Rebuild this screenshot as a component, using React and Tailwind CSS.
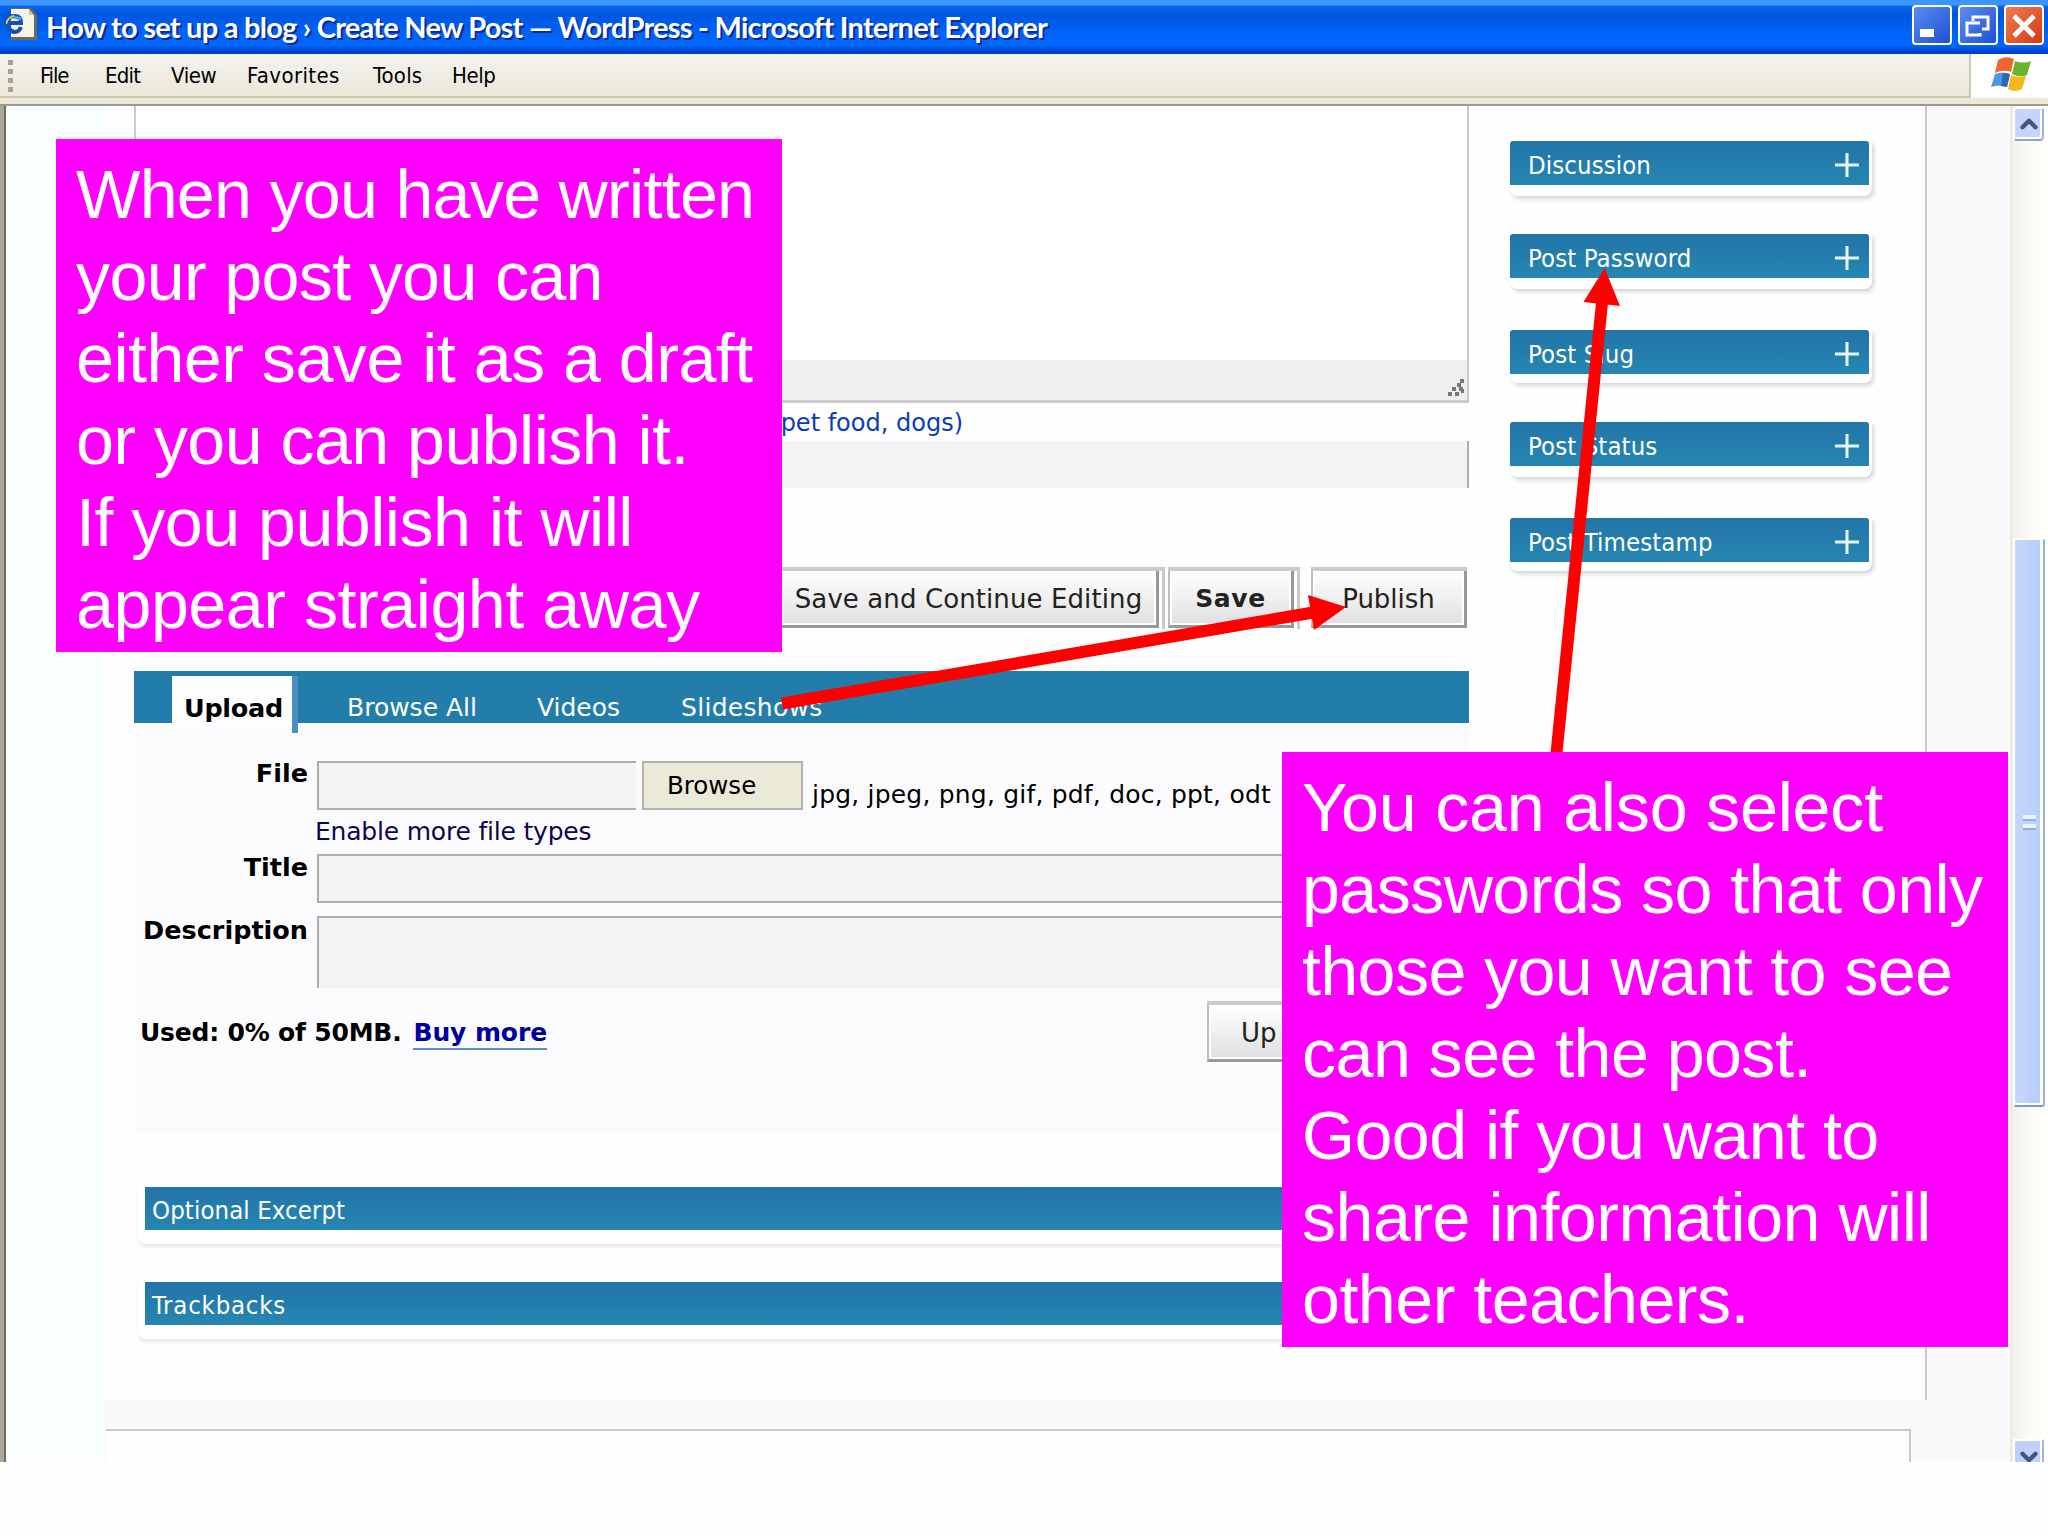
import { ChevronDown, ChevronUp } from "lucide-react";

const menuItems = [
  { label: "File", className: "w-[65px] tracking-[-1.2px]" },
  { label: "Edit", className: "w-[66px] tracking-[-0.8px]" },
  { label: "View", className: "w-[76px] tracking-[-0.4px]" },
  { label: "Favorites", className: "w-[126px] tracking-[0.4px]" },
  { label: "Tools", className: "w-[79px] tracking-[0.2px]" },
  { label: "Help", className: "w-[60px] tracking-[-0.4px]" },
];

const sidebarBoxes = [
  { title: "Discussion", className: "mb-[38px] h-[55px]" },
  { title: "Post Password", className: "mb-[41px] h-[55px]" },
  { title: "Post Slug", className: "mb-[39px] h-[53px]" },
  { title: "Post Status", className: "mb-[41px] h-[55px]" },
  { title: "Post Timestamp", className: "h-[53px]" },
];

const publishNote = [
  { text: "When you have written", className: "tracking-[-0.76px]" },
  { text: "your post you can", className: "tracking-[-0.7px]" },
  { text: "either save it as a draft", className: "tracking-[-0.55px]" },
  { text: "or you can publish it.", className: "tracking-[-0.6px]" },
  { text: "If you publish it will", className: "tracking-[-0.55px]" },
  { text: "appear straight away", className: "tracking-[-0.5px]" },
];

const passwordNote = [
  { text: "You can also select", className: "tracking-[-0.25px]" },
  { text: "passwords so that only", className: "tracking-[-0.62px]" },
  { text: "those you want to see", className: "tracking-[-0.65px]" },
  { text: "can see the post.", className: "tracking-[-0.6px]" },
  { text: "Good if you want to", className: "tracking-[-0.6px]" },
  { text: "share information will", className: "tracking-[-0.55px]" },
  { text: "other teachers.", className: "tracking-[-0.55px]" },
];

const PageIcon = () => (
  <svg className="mt-[7px] h-[33px] w-[32px]" viewBox="0 0 32 33">
    <path d="M5 1h20l6 7v25H5z" fill="#6b6a5c" />
    <path d="M5 2h18v6h5v22H5z" fill="#f6f4e6" />
    <path d="M23 2v6h5z" fill="#c9c5ab" />
    <path d="M15 20q-2 5-6 5t-6-4-1-8 7-4 6 7H4" fill="none" stroke="#1450b8" strokeWidth="4" />
    <path d="M8 10l7 2" stroke="#4aa3ee" strokeWidth="3" />
    <path d="M0 17q2-7 8-8" stroke="#e5c04c" strokeWidth="2" fill="none" />
  </svg>
);

const WindowsFlag = () => (
  <svg className="h-[36px] w-[40px]" viewBox="0 0 40 36">
    <path d="M7 3q7-5 16-1l-3 13q-8-3-16 1z" fill="#f0652f" />
    <path d="M24 4q8 3 16 0l-4 14q-7 3-15-1z" fill="#6bb52c" />
    <path d="M4 17q7-3 15 0l-3 13q-8-3-16 0z" fill="#4f97e6" />
    <path d="M12 16q4 0 7 1l-3 13-6-1z" fill="#2f66b4" />
    <path d="M20 18q7 3 15 1l-4 13q-7 4-14 0z" fill="#f5b81c" />
  </svg>
);

const TitleBar = () => (
  <div className="flex h-[54px] items-start bg-[linear-gradient(180deg,#3c94ff_0px,#3c94ff_5px,#0868f0_6px,#0055e0_14px,#0062f6_32px,#0068ff_45px,#0048d8_50px,#003fcf_54px)] pl-[6px]">
    <PageIcon />
    <div className="ml-[8px] mt-[7px] w-[1866px] whitespace-nowrap font-['Liberation_Sans_Narrow',Lato,sans-serif] text-[29px] font-bold leading-[40px] tracking-[-0.75px] text-white [text-shadow:2px_2px_0_#0a2a9c]">
      How to set up a blog › Create New Post — WordPress - Microsoft Internet
      Explorer
    </div>
    <div className="mt-[5px] flex gap-[6px]">
      <div className="h-[40px] w-[40px] rounded-[4px] border-2 border-white bg-linear-to-br from-[#5b8cf0] to-[#1e4fd2] pl-[6px] pt-[22px]">
        <div className="h-[8px] w-[14px] bg-white" />
      </div>
      <div className="h-[40px] w-[40px] rounded-[4px] border-2 border-white bg-linear-to-br from-[#5b8cf0] to-[#1e4fd2]">
        <svg className="h-[36px] w-[36px]" viewBox="0 0 36 36" fill="none" stroke="#fff" strokeWidth="3">
          <path d="M20 16H7V28H20V26M13 14V10H28V22H22" />
        </svg>
      </div>
      <div className="h-[40px] w-[40px] rounded-[4px] border-2 border-white bg-linear-to-br from-[#ee7a52] to-[#d33a10]">
        <svg className="h-[36px] w-[36px]" viewBox="0 0 36 36" stroke="#fff" strokeWidth="5">
          <path d="M8 9L28 29M28 9L8 29" />
        </svg>
      </div>
    </div>
  </div>
);

const MenuBar = () => (
  <div className="h-[52px] border-b-2 border-[#9d9b8a] bg-[#ece9d8]">
    <div className="flex h-[44px]">
      <div className="flex w-[1971px] border-b-2 border-r-2 border-[#cbc8b6] bg-linear-to-b from-[#f3f2f0] to-[#ebe8d9] pl-[8px]">
        <div className="flex w-[32px] flex-col gap-[4px] pt-[6px]">
          <div className="h-[5px] w-[5px] bg-[#a5a394]" />
          <div className="h-[5px] w-[5px] bg-[#a5a394]" />
          <div className="h-[5px] w-[5px] bg-[#a5a394]" />
          <div className="h-[5px] w-[5px] bg-[#a5a394]" />
        </div>
        {menuItems.map((item) => (
          <div
            key={item.label}
            className={`pt-[7px] font-['DejaVu_Sans_Condensed','DejaVu_Sans',sans-serif] text-[22px] leading-[30px] text-black [font-stretch:condensed] ${item.className}`}
          >
            {item.label}
          </div>
        ))}
      </div>
      <div className="flex flex-1 items-start bg-white pl-[20px] pt-[3px]">
        <WindowsFlag />
      </div>
    </div>
  </div>
);

// WordPress-style raised button, the first two have a second edge on the right
const PostButton = ({ children, doubled, className = "", align = "justify-center" }) => (
  <div
    className={`flex h-[62px] border-t-4 border-[#cbcbcb] bg-white ${
      doubled ? "border-r-[3px] pr-[3px]" : ""
    } ${className}`}
  >
    <div
      className={`flex h-[57px] flex-1 items-center whitespace-nowrap border-b-[3px] border-l-2 border-r-[3px] border-b-[#999] border-l-[#bdbdbd] border-r-[#999] bg-linear-to-b from-white to-[#e0e0e2] pt-[2px] text-[26px] text-[#222] shadow-[inset_0_0_0_2px_#fff] ${align}`}
    >
      {children}
    </div>
  </div>
);

const SidebarBox = ({ title, className }) => (
  <div
    className={`w-[362px] rounded-b-[8px] bg-white pr-[3px] shadow-[2px_3px_4px_rgba(0,0,0,0.16)] ${className}`}
  >
    <div className="flex h-[44px] items-center justify-between rounded-t-[3px] bg-linear-to-b from-[#2175a7] to-[#2686b2] pl-[18px] pr-[9px] pt-[3px] text-white">
      <span className="pt-[2px] font-['DejaVu_Sans_Condensed','DejaVu_Sans',sans-serif] text-[25.500px] tracking-[0.1px] [font-stretch:condensed]">
        {title}
      </span>
      <svg className="h-[26px] w-[26px]" viewBox="0 0 26 26" stroke="#e8f6fc" strokeWidth="3">
        <path d="M13 1V25M1 13H25" />
      </svg>
    </div>
  </div>
);

const WideBox = ({ title, className, textClassName }) => (
  <div className={`ml-[4px] h-[57px] rounded-b-[8px] bg-white pl-[7px] shadow-[0_3px_3px_rgba(0,0,0,0.09)] ${className}`}>
    <div
      className={`flex h-[43px] items-center bg-linear-to-b from-[#2175a7] to-[#2686b2] pl-[7px] pt-[3px] font-['DejaVu_Sans_Condensed','DejaVu_Sans',sans-serif] text-[25.500px] text-white [font-stretch:condensed] ${textClassName}`}
    >
      {title}
    </div>
  </div>
);

const UploadPanel = () => (
  <div>
    <div className="relative flex h-[52px] items-start bg-[#237dab] pl-[38px] text-[25px] leading-[30px] text-white">
      <div className="mt-[5px] h-[57px] w-[126px] border-r-[6px] border-[#4a8fbf] bg-[#fdfdff] pl-[12px] pt-[17px] text-[25.500px] font-bold tracking-[-0.3px] text-black">
        Upload
      </div>
      <div className="ml-[49px] w-[190px] pt-[22px]">Browse All</div>
      <div className="w-[144px] pt-[22px]">Videos</div>
      <div className="pt-[22px] tracking-[0.3px]">Slideshows</div>
    </div>

    <div className="ml-[3px] h-[410px] bg-[#fbfbfe] pt-[38px] text-black">
      <div className="flex">
        <div className="w-[171px] text-right text-[25.500px] font-bold leading-[30px]">
          <span className="relative -top-[3px]">File</span>
        </div>
        <div className="ml-[9px]">
          <div className="flex">
            <div className="h-[49px] w-[319px] border-y-2 border-l-2 border-[#adadad] bg-[#f4f4f6]" />
            <div className="ml-[6px] h-[49px] w-[161px] border-2 border-[#b2b2ae] bg-[#ebe9d8] pl-[23px] text-[24.500px] leading-[45px]">
              Browse
            </div>
            <div className="ml-[9px] whitespace-nowrap pt-[18px] text-[25px] leading-[32px] tracking-[0.2px]">
              jpg, jpeg, png, gif, pdf, doc, ppt, odt
            </div>
          </div>
          <div className="-ml-[2px] h-[43px] text-[25px] leading-[42px] tracking-[-0.2px] text-[#0b0650]">
            Enable more file types
          </div>
        </div>
      </div>

      <div className="flex h-[62px]">
        <div className="w-[171px] text-right text-[25.500px] font-bold leading-[26px]">
          Title
        </div>
        <div className="ml-[9px] h-[49px] flex-1 border-2 border-[#adadad] bg-[#f4f4f6]" />
      </div>
      <div className="flex h-[85px]">
        <div className="w-[171px] whitespace-nowrap text-right text-[25.500px] font-bold leading-[28px]">
          Description
        </div>
        <div className="ml-[9px] h-[72px] flex-1 border-x-2 border-t-2 border-[#adadad] bg-[#f4f4f6]" />
      </div>

      <div className="flex items-start">
        <div className="flex w-[1070px] pl-[3px] pt-[17px] text-[25px] font-bold leading-[30px] tracking-[-0.2px]">
          <span>Used: 0% of 50MB.</span>
          <span className="ml-[12px] border-b-2 border-[#5a90c8] tracking-[-0.1px] text-[#00009c]">
            Buy more
          </span>
        </div>
        <PostButton className="w-[150px]" align="justify-start pl-[32px]">
          Up
        </PostButton>
      </div>
    </div>
  </div>
);

const EditorColumn = () => (
  <div className="ml-[30px] w-[1335px]">
    {/* Bottom of the post textarea with its status bar */}
    <div className="flex h-[297px] flex-col justify-end border-x-2 border-b-[3px] border-[#cacaca] bg-white">
      <div className="flex h-[40px] items-end justify-end bg-[#efefef] pb-[3px] pr-[2px]">
        <svg className="h-[18px] w-[18px]" viewBox="0 0 18 18" fill="#777">
          <path d="M13 0h4v4h-4zM10 4h4v4h-4zM5 8h4v4h-4zM12 8h4v4h-4zM1 13h4v4h-4zM8 13h4v4h-4zM14 10h3v4h-3z" />
        </svg>
      </div>
    </div>
    <div className="flex h-[38px] w-[829px] justify-end whitespace-nowrap text-[24px] leading-[40px] text-[#0a3bb8]">
      pet food, dogs)
    </div>
    <div className="h-[47px] border-r-2 border-[#b0b0b0] bg-[#f4f4f6]" />

    <div className="mb-[42px] mt-[79px] flex justify-end pr-[2px]">
      <PostButton doubled className="w-[386px]">
        <span className="tracking-[0.1px]">Save and Continue Editing</span>
      </PostButton>
      <PostButton doubled className="ml-[3px] w-[132px]">
        <span className="text-[25px] font-bold tracking-[0.6px]">Save</span>
      </PostButton>
      <PostButton className="ml-[11px] w-[156px]">Publish</PostButton>
    </div>

    <UploadPanel />
    <WideBox title="Optional Excerpt" className="mt-[54px]" textClassName="tracking-[0.1px]" />
    <WideBox title="Trackbacks" className="mt-[38px]" textClassName="tracking-[0.8px]" />
  </div>
);

const ScrollBar = () => (
  <div className="flex w-[38px] flex-col border-l-2 border-[#ebe9de] bg-linear-to-r from-[#f1efe8] via-[#fbfbf8] to-[#fefefc] pl-px">
    <div className="mt-[1px] flex h-[34px] w-[31px] items-center justify-center rounded-[4px] border-2 border-b-[#8aa4d6] border-l-white border-r-[#9fb6dc] border-t-white bg-[#c5d4fd] shadow-[inset_-2px_-2px_0_#fff]">
      <ChevronUp className="h-[26px] w-[26px] shrink-0 text-[#44557f]" strokeWidth={4} />
    </div>
    <div className="mt-[397px] flex h-[569px] w-[32px] flex-col items-center justify-center gap-[3px] rounded-[3px] border-2 border-b-[#7f98cc] border-l-white border-r-[#9bb2cf] border-t-white bg-linear-to-r from-[#c8d5fd] to-[#b3cdf8] shadow-[inset_-3px_-2px_0_#fff]">
      <div className="h-[6px] w-[13px] border-b-2 border-[#8fb0f0] bg-[#eef4ff]" />
      <div className="h-[6px] w-[13px] border-b-2 border-[#8fb0f0] bg-[#eef4ff]" />
    </div>
    <div className="mt-auto flex h-[23px] w-[31px] justify-center overflow-hidden border-x-2 border-t-2 border-l-white border-r-[#9fb6dc] border-t-white bg-[#c0d0fb] shadow-[inset_-2px_0_0_#fff]">
      <ChevronDown className="mt-[3px] h-[26px] w-[26px] shrink-0 text-[#44557f]" strokeWidth={4} />
    </div>
  </div>
);

const Note = ({ lines, className }) => (
  <div
    className={`absolute w-[726px] whitespace-nowrap bg-[#ff00ff] pl-[20px] pt-[14px] font-['Liberation_Sans',Arial,sans-serif] text-[68.270px] leading-[82px] text-white ${className}`}
  >
    {lines.map((line) => (
      <div key={line.text} className={line.className}>
        {line.text}
      </div>
    ))}
  </div>
);

const App = () => {
  return (
    <div className="relative h-[1536px] w-[2048px] overflow-hidden bg-[#fefefe] font-['DejaVu_Sans',Verdana,sans-serif]">
      <TitleBar />
      <MenuBar />

      <div className="flex h-[1356px]">
        <div className="w-[6px] border-r-2 border-[#6f6d62] bg-[#a9a797]" />
        <div className="w-[98px] bg-[#f8fffe]" />
        <div className="w-[1906px] bg-[#fafafd]">
          <div className="flex h-[1294px] w-[1823px] border-r-2 border-[#c9c9cd] bg-[#fefefe]">
            <EditorColumn />
            <div className="ml-[41px] pt-[35px]">
              {sidebarBoxes.map((box) => (
                <SidebarBox key={box.title} title={box.title} className={box.className} />
              ))}
            </div>
          </div>
          <div className="h-[62px] pl-[2px] pt-[29px]">
            <div className="h-[33px] w-[1805px] border-r-2 border-t-2 border-[#c9c9cd] bg-[#fefefe]" />
          </div>
        </div>
        <ScrollBar />
      </div>

      {/* Arrows from the notes to the controls they describe */}
      <svg className="absolute left-0 top-0 h-[1536px] w-[2048px]" viewBox="0 0 2048 1536" fill="#ff0000" stroke="none">
        <path d="M782 703.500L1313 612.500" stroke="#ff0000" strokeWidth="12" />
        <path d="M1346 607L1308 595L1314 630Z" />
        <path d="M1556.500 753L1602 303" stroke="#ff0000" strokeWidth="12" />
        <path d="M1604.600 268L1583.500 302L1620 306Z" />
      </svg>

      <Note lines={publishNote} className="left-[56px] top-[139px] h-[513px]" />
      <Note lines={passwordNote} className="left-[1282px] top-[752px] h-[595px]" />
    </div>
  );
};

export default App;
